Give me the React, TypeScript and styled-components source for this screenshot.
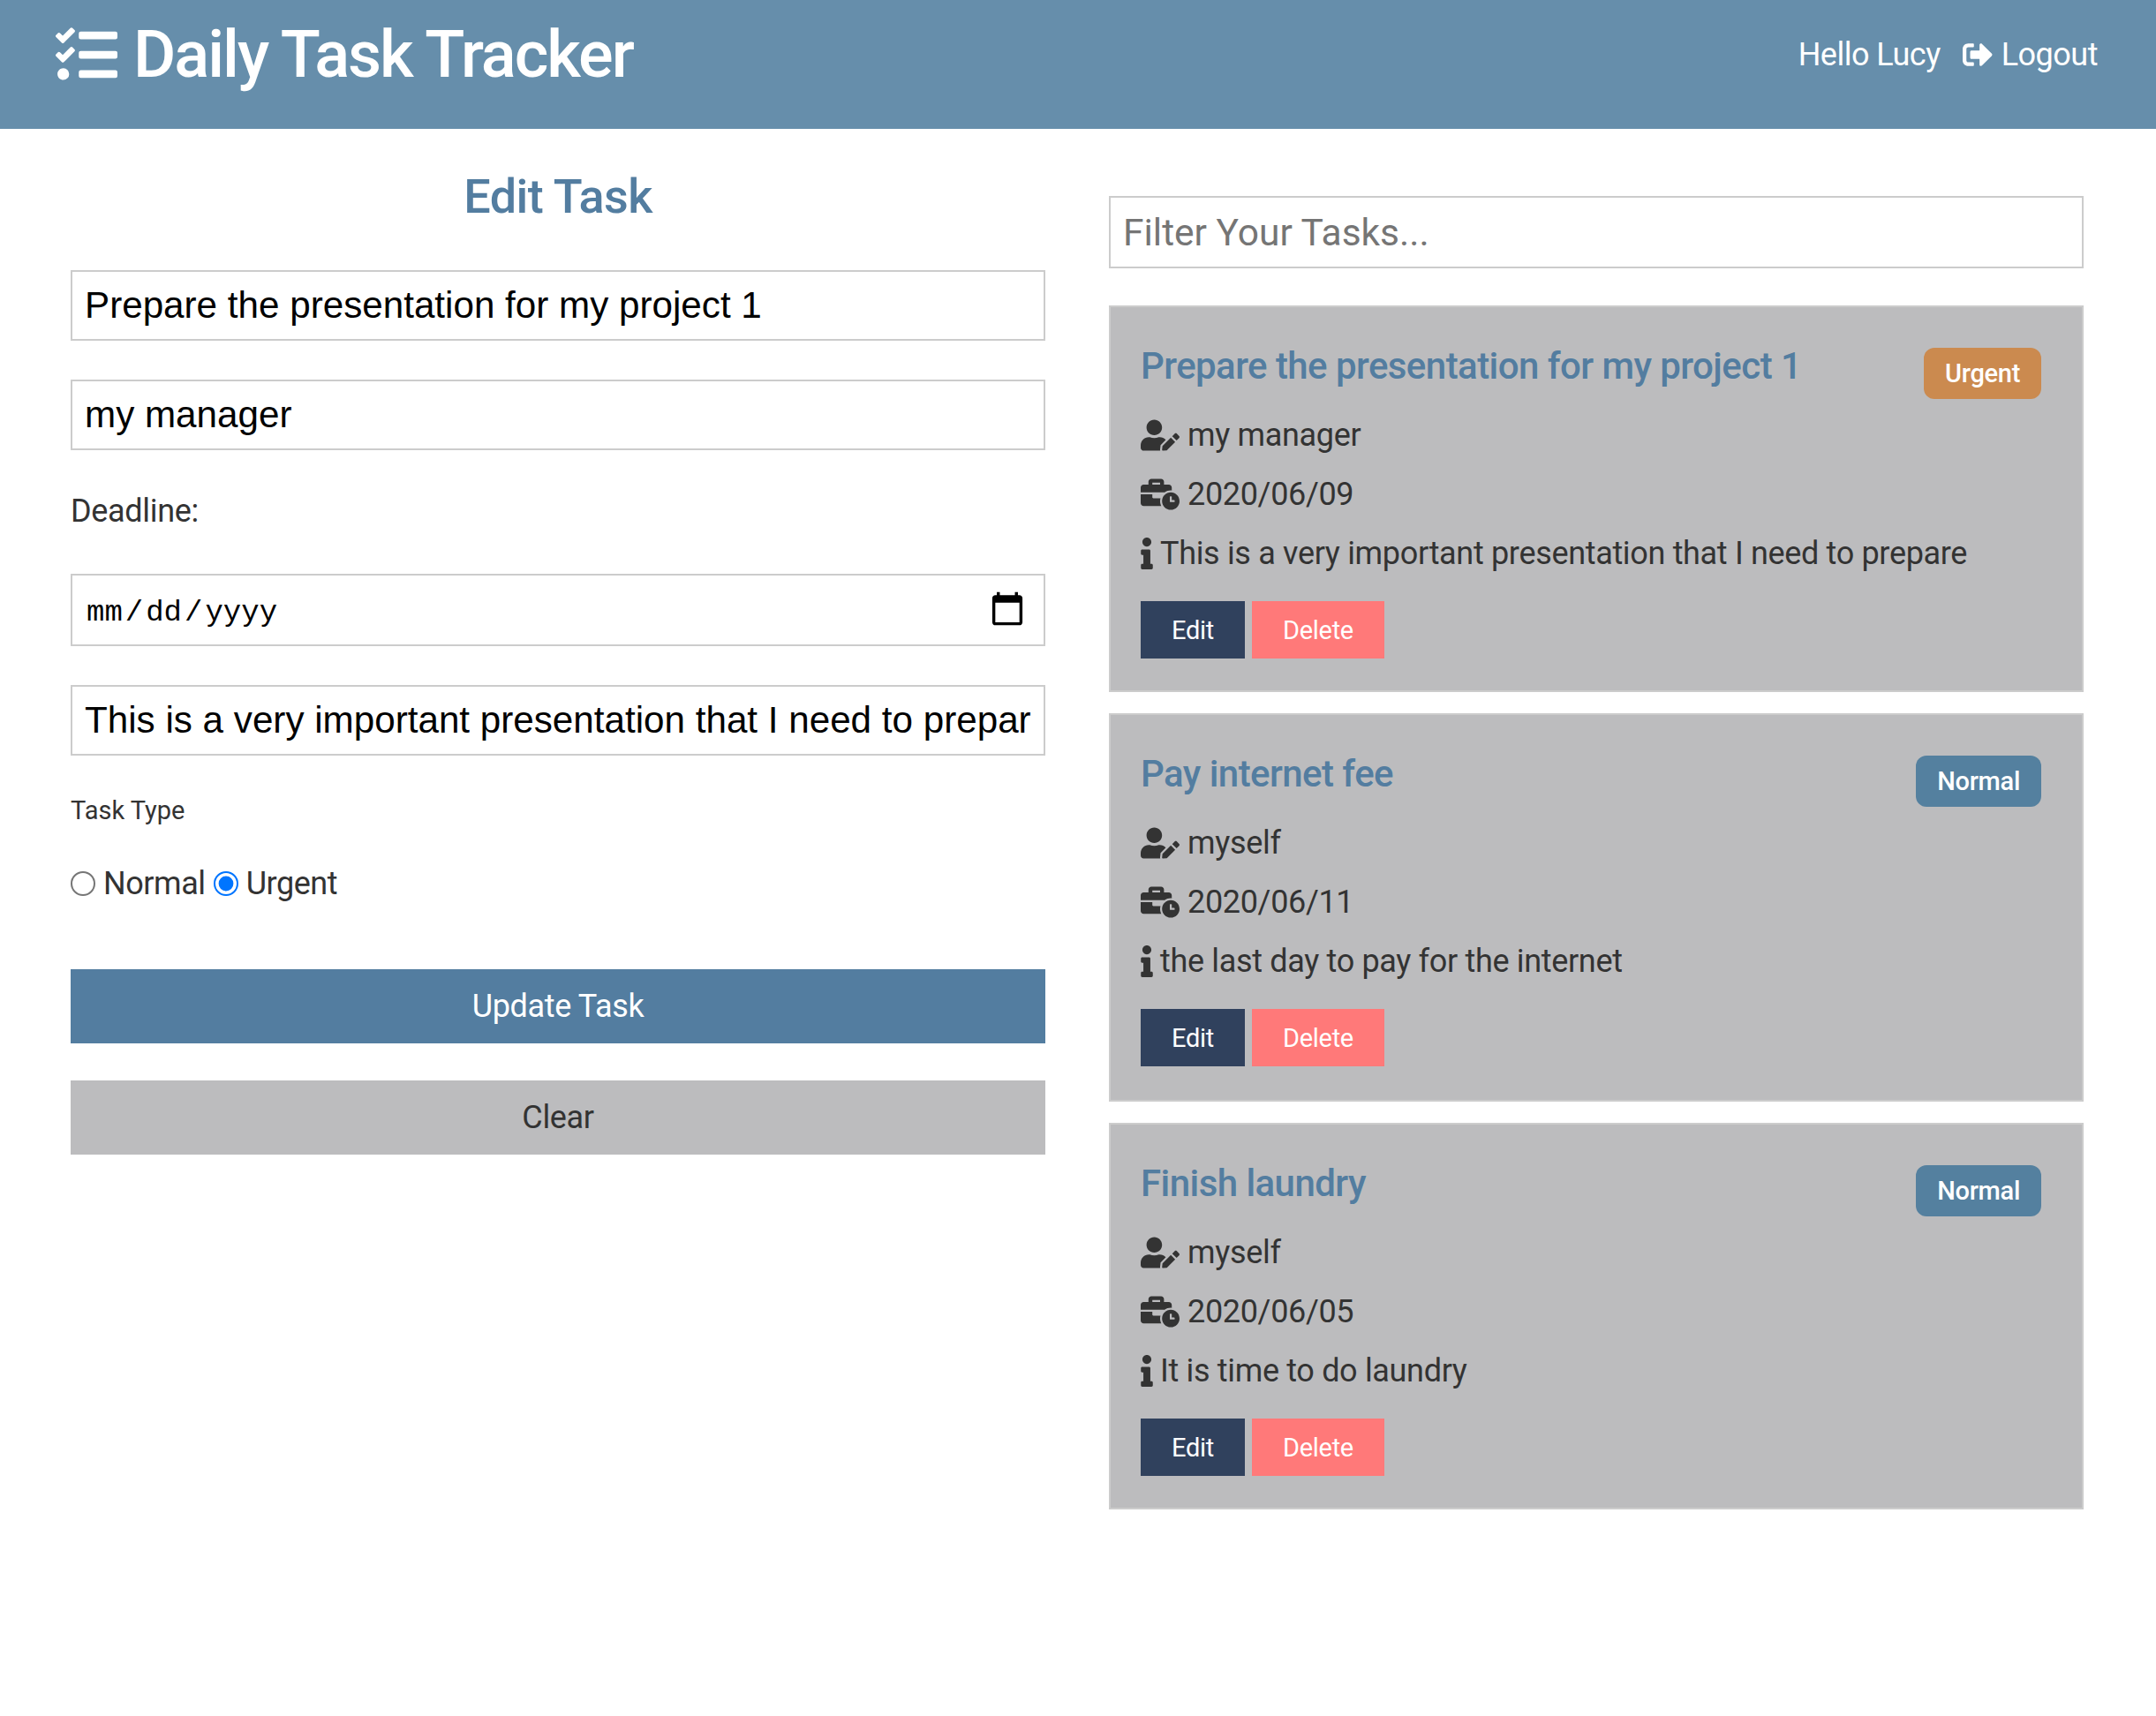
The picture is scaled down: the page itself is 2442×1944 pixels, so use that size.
import styled, { createGlobalStyle } from 'styled-components'
import { FaTasks, FaSignOutAlt, FaUserEdit, FaBusinessTime, FaInfo } from 'react-icons/fa'

const tasks = [
  {
    title: 'Prepare the presentation for my project 1',
    person: 'my manager',
    date: '2020/06/09',
    details: 'This is a very important presentation that I need to prepare',
    urgent: true,
  },
  {
    title: 'Pay internet fee',
    person: 'myself',
    date: '2020/06/11',
    details: 'the last day to pay for the internet',
    urgent: false,
  },
  {
    title: 'Finish laundry',
    person: 'myself',
    date: '2020/06/05',
    details: 'It is time to do laundry',
    urgent: false,
  },
]

export default function App() {
  return (
    <>
      <GlobalStyle />
      <Navbar>
        <Brand>
          <FaTasks size={70} />
          <span>Daily Task Tracker</span>
        </Brand>
        <NavLinks>
          <span>Hello Lucy</span>
          <LogoutLink>
            <FaSignOutAlt size={34} />
            Logout
          </LogoutLink>
        </NavLinks>
      </Navbar>

      <Main>
        <FormColumn>
          <FormTitle>Edit Task</FormTitle>
          <TextInput type="text" defaultValue="Prepare the presentation for my project 1" />
          <TextInput type="text" defaultValue="my manager" />
          <DeadlineLabel>Deadline:</DeadlineLabel>
          <DateInput type="date" />
          <TextInput
            type="text"
            defaultValue="This is a very important presentation that I need to prepare"
          />
          <TypeLabel>Task Type</TypeLabel>
          <RadioRow>
            <Radio type="radio" name="type" id="normal" />
            <label htmlFor="normal">Normal</label>
            <Radio type="radio" name="type" id="urgent" defaultChecked />
            <label htmlFor="urgent">Urgent</label>
          </RadioRow>
          <WideButton $primary>Update Task</WideButton>
          <WideButton>Clear</WideButton>
        </FormColumn>

        <ListColumn>
          <FilterInput type="text" placeholder="Filter Your Tasks..." />
          {tasks.map((task) => (
            <Card key={task.title}>
              <CardHead>
                <CardTitle>{task.title}</CardTitle>
                <Badge $urgent={task.urgent}>{task.urgent ? 'Urgent' : 'Normal'}</Badge>
              </CardHead>
              <Line>
                <FaUserEdit size={44} />
                {task.person}
              </Line>
              <Line>
                <FaBusinessTime size={44} />
                {task.date}
              </Line>
              <Line>
                <InfoIcon />
                {task.details}
              </Line>
              <Actions>
                <ActionButton $bg="#30415d" $w={118}>Edit</ActionButton>
                <ActionButton $bg="#ff7979" $w={150}>Delete</ActionButton>
              </Actions>
            </Card>
          ))}
        </ListColumn>
      </Main>
    </>
  )
}

const GlobalStyle = createGlobalStyle`
  * {
    box-sizing: border-box;
  }
  body {
    margin: 0;
    background: #fff;
    color: #333;
    font-family: Roboto, sans-serif;
    font-size: 36px;
    line-height: 1.5;
    letter-spacing: -0.33px;
  }
`

const Navbar = styled.nav`
  height: 146px;
  background: #668eab;
  color: #fff;
  display: flex;
  align-items: center;
  justify-content: space-between;
  padding: 0 66px 22px 63px;
`

const Brand = styled.div`
  display: flex;
  align-items: center;
  gap: 18px;
  font-size: 74px;
  font-weight: 500;
  letter-spacing: -2px;
  line-height: 1;
`

const NavLinks = styled.div`
  display: flex;
  align-items: center;
  gap: 25px;
  letter-spacing: -0.5px;
`

const LogoutLink = styled.span`
  display: flex;
  align-items: center;
  gap: 10px;
`

const Main = styled.main`
  display: grid;
  grid-template-columns: 1104px 1104px;
  column-gap: 72px;
  padding-left: 80px;
`

const FormColumn = styled.section`
  display: flex;
  flex-direction: column;
`

const FormTitle = styled.h2`
  margin: 45px 0 51px;
  color: #537da0;
  font-size: 54px;
  font-weight: 500;
  letter-spacing: -0.6px;
  line-height: 64px;
  text-align: center;
`

const TextInput = styled.input`
  width: 100%;
  height: 80px;
  margin-bottom: 44px;
  padding: 0 14px;
  border: 2px solid #ccc;
  background: #fff;
  color: #000;
  font-family: 'Liberation Sans', Arial, sans-serif;
  font-size: 42.2px;
  outline: none;
`

const DeadlineLabel = styled.label`
  display: block;
  margin: -2px 0 44px;
  height: 54px;
`

const DateInput = styled.input`
  width: 100%;
  height: 82px;
  margin-bottom: 44px;
  padding: 6px 14px 0 15px;
  border: 2px solid #ccc;
  background: #fff;
  color: #000;
  font-family: 'Liberation Mono', monospace;
  font-size: 34px;
  outline: none;
  &::-webkit-datetime-edit-text {
    padding: 0 2px;
  }
  &::-webkit-calendar-picker-indicator {
    width: 44px;
    height: 44px;
    margin-right: 5px;
    margin-top: -6px;
    padding: 0;
  }
`

const TypeLabel = styled.label`
  display: block;
  margin: -4px 0 34px;
  font-size: 29px;
  letter-spacing: 0;
  line-height: 44px;
`

const RadioRow = styled.div`
  display: flex;
  align-items: center;
  height: 54px;
  margin-bottom: 70px;
  letter-spacing: -0.45px;
  label {
    margin-left: 9px;
    margin-right: 9px;
  }
`

const Radio = styled.input`
  width: 14px;
  height: 14px;
  margin: 0;
  zoom: 2;
`

const WideButton = styled.button<{ $primary?: boolean }>`
  width: 100%;
  height: 84px;
  margin-bottom: 42px;
  border: none;
  background: ${({ $primary }) => ($primary ? '#537da0' : '#bcbcbe')};
  color: ${({ $primary }) => ($primary ? '#fff' : '#333')};
  font-family: Roboto, sans-serif;
  font-size: 36px;
  letter-spacing: -0.35px;
`

const ListColumn = styled.section`
  display: flex;
  flex-direction: column;
  padding-top: 76px;
`

const FilterInput = styled.input`
  width: 100%;
  height: 82px;
  margin-bottom: 42px;
  padding: 0 14px;
  border: 2px solid #ccc;
  background: #fff;
  font-family: Roboto, sans-serif;
  font-size: 42.5px;
  outline: none;
  &::placeholder {
    color: #757575;
  }
`

const Card = styled.article`
  height: 438px;
  margin-bottom: 24px;
  padding: 44px 46px 0 34px;
  border: 2px solid #ccc;
  background: #bcbcbe;
  &:nth-of-type(2) {
    height: 440px;
  }
`

const CardHead = styled.div`
  display: flex;
  align-items: flex-start;
  justify-content: space-between;
  height: 67px;
`

const CardTitle = styled.h3`
  margin: -3px 0 0;
  color: #537da0;
  font-size: 42px;
  font-weight: 500;
  letter-spacing: -0.56px;
  line-height: 52px;
`

const Badge = styled.span<{ $urgent: boolean }>`
  margin-top: 2px;
  padding: 0 24px;
  height: 58px;
  border-radius: 12px;
  background: ${({ $urgent }) => ($urgent ? '#cb8a4f' : '#54809f')};
  color: #fff;
  font-size: 29px;
  font-weight: 500;
  letter-spacing: -0.3px;
  line-height: 58px;
`

const Line = styled.div`
  display: flex;
  align-items: center;
  gap: 9px;
  height: 67px;
  svg {
    flex: none;
  }
`

const InfoIcon = styled(FaInfo)`
  width: 14px;
  height: 36px;
  margin-right: -1px;
`

const Actions = styled.div`
  display: flex;
  gap: 8px;
  margin-top: 21px;
`

const ActionButton = styled.button<{ $bg: string; $w: number }>`
  width: ${({ $w }) => $w}px;
  height: 65px;
  border: none;
  background: ${({ $bg }) => $bg};
  color: #fff;
  font-family: Roboto, sans-serif;
  font-size: 29px;
  letter-spacing: -0.3px;
`
